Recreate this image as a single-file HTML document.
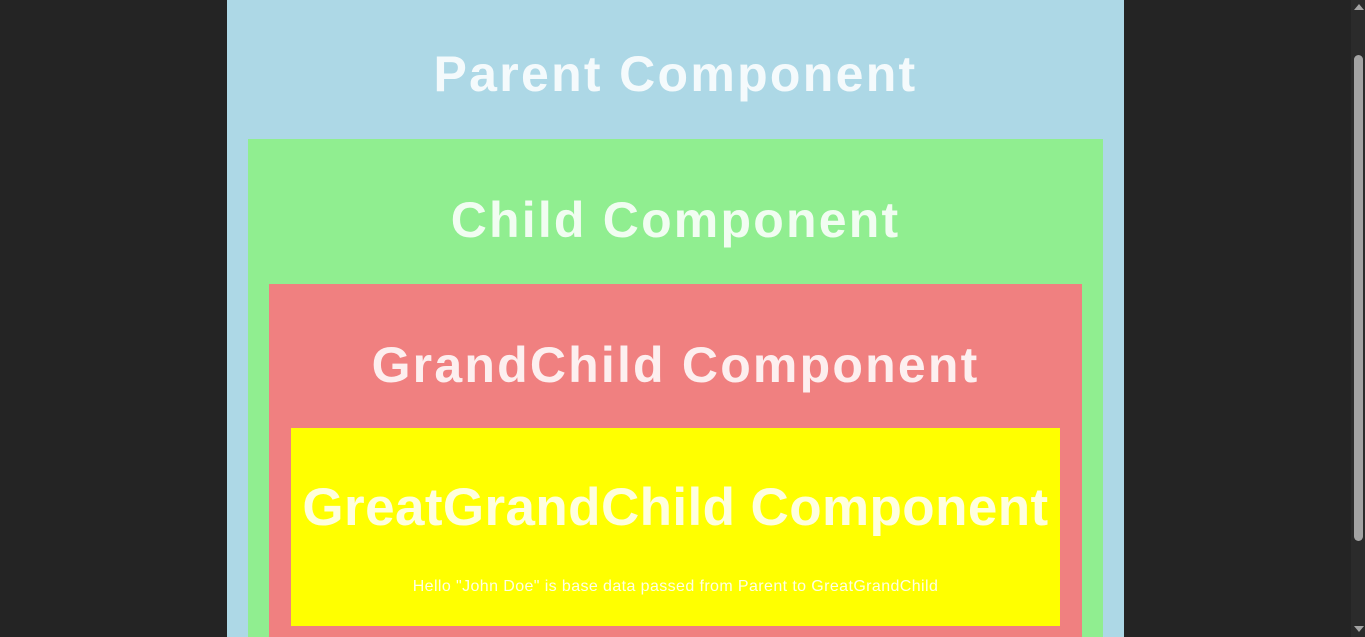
<!DOCTYPE html>
<html><head><style>
html,body{margin:0;padding:0;width:1365px;height:637px;overflow:hidden;background:#242424;font-family:"Liberation Sans",sans-serif;}
.b{position:absolute;}
h{position:absolute;left:0;right:0;text-align:center;color:rgba(255,255,255,0.87);font-weight:bold;white-space:nowrap;}
</style></head><body>
<div class="b" style="left:227px;top:0;width:897px;height:637px;background:#add8e6;">
  <h style="top:44px;font-size:50px;line-height:60px;letter-spacing:2.3px;">Parent Component</h>
</div>
<div class="b" style="left:248px;top:139px;width:855px;height:498px;background:#90ee90;">
  <h style="top:51px;font-size:50px;line-height:60px;letter-spacing:2.2px;">Child Component</h>
</div>
<div class="b" style="left:269px;top:284px;width:813px;height:353px;background:#f08080;">
  <h style="top:51px;font-size:50px;line-height:60px;letter-spacing:2.2px;">GrandChild Component</h>
</div>
<div class="b" style="left:291px;top:428px;width:769px;height:198px;background:#ffff00;">
  <h style="top:47px;font-size:53px;line-height:66px;letter-spacing:0.4px;">GreatGrandChild Component</h>
  <div style="position:absolute;top:150px;left:0;right:0;text-align:center;color:rgba(255,255,255,0.9);font-size:16px;letter-spacing:0.4px;white-space:nowrap;">Hello "John Doe" is base data passed from Parent to GreatGrandChild</div>
</div>
<div class="b" style="left:1351px;top:0;width:14px;height:637px;background:#2b2b2b;"></div>
<div class="b" style="left:1354px;top:55px;width:9px;height:486px;background:#a3a3a3;border-radius:5px;"></div>
<div class="b" style="left:1354px;top:4px;width:0;height:0;border-left:5px solid transparent;border-right:5px solid transparent;border-bottom:6px solid #a3a3a3;"></div>
<div class="b" style="left:1354px;top:626px;width:0;height:0;border-left:5px solid transparent;border-right:5px solid transparent;border-top:6px solid #a3a3a3;"></div>
</body></html>
